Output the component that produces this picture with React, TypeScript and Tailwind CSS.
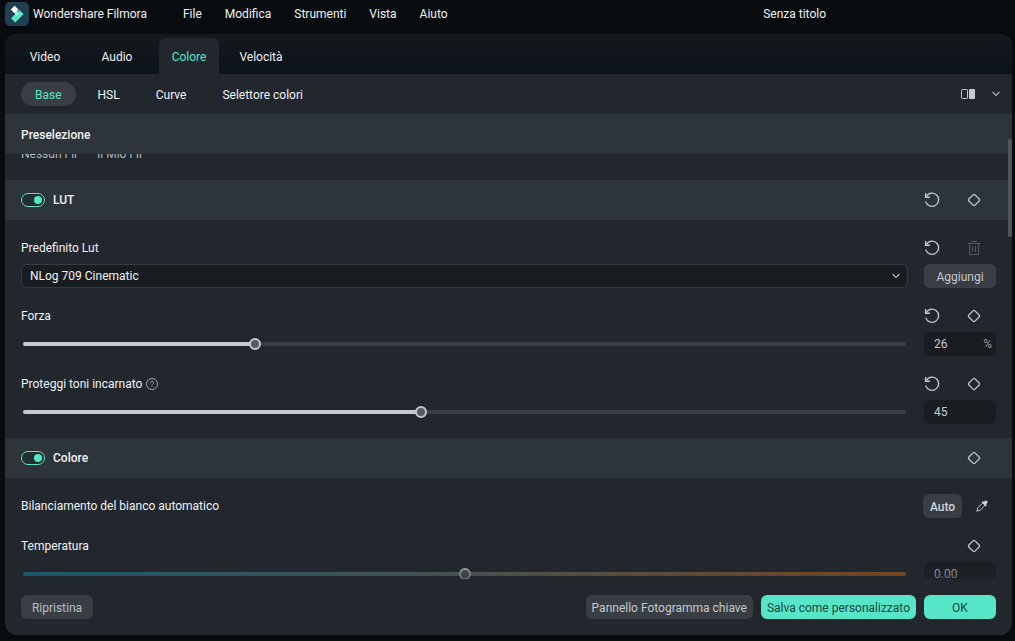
import { useState } from 'react';
import type { ReactNode } from 'react';
import { clsx } from 'clsx';

const menus = ['File', 'Modifica', 'Strumenti', 'Vista', 'Aiuto'];
const tabs = ['Video', 'Audio', 'Colore', 'Velocità'];
const subTabs = ['Base', 'HSL', 'Curve', 'Selettore colori'];

function Logo() {
  return (
    <svg width="24" height="24" viewBox="0 0 24 24" aria-hidden="true">
      <rect width="24" height="24" rx="5" fill="#223f52" />
      <path d="M9.6 3.8 L13.6 7.8 L9.8 11.6 L5.8 7.6 Z" fill="#ffffff" />
      <path d="M14.4 8 L18.6 12.2 L10.2 20.4 L6 16.2 Z" fill="#56e5c6" />
      <path d="M9.8 11.6 L12 9.4 L14 11.6 L11.4 14 Z" fill="#a4f3e1" />
    </svg>
  );
}

function ResetIcon() {
  return (
    <svg width="16" height="16" viewBox="0 0 16 16" fill="none" stroke="#c0c5ca" strokeWidth="1.4">
      <path d="M2 5 A6.6 6.6 0 1 1 1.7 9.6" />
      <path d="M1.6 1 V5.2 H6" />
    </svg>
  );
}

function DiamondIcon() {
  return (
    <svg width="16" height="16" viewBox="0 0 16 16" fill="none" stroke="#c0c5ca" strokeWidth="1.3">
      <rect x="3.7" y="3.7" width="8.6" height="8.6" rx="1.3" transform="rotate(45 8 8)" />
    </svg>
  );
}

function TrashIcon() {
  return (
    <svg width="16" height="16" viewBox="0 0 16 16" fill="none" stroke="#555a60" strokeWidth="1">
      <path d="M1.5 3.5 H14.5 M5 1.5 H11 M3.5 3.5 V14.5 H12.5 V3.5 M6.5 6 V12 M9.5 6 V12" />
    </svg>
  );
}

function DropperIcon() {
  return (
    <svg width="16" height="16" viewBox="0 0 16 16" fill="none">
      <path d="M9 4.6 L3.8 9.8 L2.8 13.2 L6.2 12.2 L11.4 7" stroke="#c0c5ca" strokeWidth="1" strokeLinejoin="round" />
      <path
        d="M7.6 4.2 L8.8 3.1 L9.8 4 L11 2.8 C12.4 1.7 14.3 3.6 13.2 5 L12 6.2 L12.9 7.2 L11.8 8.4 Z"
        fill="#d3d6d9"
      />
    </svg>
  );
}

function ChevronIcon() {
  return (
    <svg width="10" height="6" viewBox="0 0 10 6" fill="none" stroke="#b4b9be" strokeWidth="1.1">
      <path d="M1.6 1 L5 4.4 L8.4 1" />
    </svg>
  );
}

function CompareIcon() {
  return (
    <svg width="14" height="10" viewBox="0 0 14 10" className="shrink-0">
      <rect x="0.5" y="0.5" width="6" height="9" rx="0.8" fill="none" stroke="#c5c9ce" />
      <rect x="8" y="0" width="6" height="10" rx="0.8" fill="#c5c9ce" />
    </svg>
  );
}

function HelpIcon() {
  return (
    <svg width="12" height="12" viewBox="0 0 12 12" fill="none" stroke="#9da2a7" strokeWidth="1">
      <circle cx="6" cy="6" r="5.5" />
      <path d="M4.5 4.9 C4.5 2.7 7.6 2.8 7.5 4.7 C7.4 5.8 6 5.8 6 7.2 M6 8.1 V9.1" />
    </svg>
  );
}

function IconButton({ label, children }: { label: string; children: ReactNode }) {
  return (
    <button type="button" aria-label={label} className="flex h-4 w-4 items-center justify-center">
      {children}
    </button>
  );
}

function KeyframeActions({ reset = true }: { reset?: boolean }) {
  return (
    <div className="ml-auto flex items-center gap-[26px] pr-[14px]">
      {reset && (
        <IconButton label="Ripristina valore">
          <ResetIcon />
        </IconButton>
      )}
      <IconButton label="Fotogramma chiave">
        <DiamondIcon />
      </IconButton>
    </div>
  );
}

function SectionHeader({ title, reset }: { title: string; reset?: boolean }) {
  const [on, setOn] = useState(true);

  return (
    <div className="flex h-10 items-center bg-[#2d343a] px-4">
      <label className="flex items-center gap-2 font-medium">
        <input type="checkbox" className="peer sr-only" checked={on} onChange={() => setOn(!on)} />
        <span
          className={clsx(
            'flex h-[14px] w-6 items-center rounded-full border px-[2px]',
            on ? 'justify-end border-[#62dcc2] bg-[#20302f]' : 'justify-start border-[#7b8187]'
          )}
        >
          <span className={clsx('h-2 w-2 rounded-full', on ? 'bg-[#56e5c6]' : 'bg-[#7b8187]')} />
        </span>
        {title}
      </label>
      <KeyframeActions reset={reset} />
    </div>
  );
}

interface SliderRowProps {
  id: string;
  label: string;
  initial: number;
  min?: number;
  unit?: string;
  digits?: number;
  help?: boolean;
  reset?: boolean;
  track?: string;
}

function SliderRow({ id, label, initial, min = 0, unit, digits = 0, help, reset, track }: SliderRowProps) {
  const [value, setValue] = useState(initial);
  const pct = ((value - min) / (100 - min)) * 100;
  const fill = `linear-gradient(to right, #c5c9d0 ${pct}%, #383f45 ${pct}%)`;

  return (
    <div className="flex flex-col gap-1">
      <div className="flex h-6 items-center gap-1">
        <label htmlFor={id}>{label}</label>
        {help && <HelpIcon />}
        <KeyframeActions reset={reset} />
      </div>
      <div className="flex items-center gap-4">
        <div className="flex h-6 flex-1 items-center px-[2px]">
          <input
            id={id}
            type="range"
            min={min}
            max={100}
            value={value}
            onChange={(e) => setValue(Number(e.target.value))}
            className="h-1 w-full appearance-none rounded-full [&::-webkit-slider-thumb]:h-3 [&::-webkit-slider-thumb]:w-3 [&::-webkit-slider-thumb]:appearance-none [&::-webkit-slider-thumb]:rounded-full [&::-webkit-slider-thumb]:border-2 [&::-webkit-slider-thumb]:border-[#c5c9d0] [&::-webkit-slider-thumb]:bg-[#555b62]"
            style={{ background: track ?? fill }}
          />
        </div>
        <div className="flex h-6 w-[72px] items-center rounded-md bg-[#191d21] pr-1 pl-[10px] text-[#c5c9cd]">
          <input
            aria-label={label}
            className="w-full min-w-0 bg-transparent outline-none"
            value={value.toFixed(digits)}
            onChange={(e) => setValue(Number(e.target.value) || 0)}
          />
          {unit && <span className="text-[#92979c]">{unit}</span>}
        </div>
      </div>
    </div>
  );
}

export default function App() {
  const [tab, setTab] = useState('Colore');
  const [subTab, setSubTab] = useState('Base');

  return (
    <div className="flex h-screen flex-col bg-[#090c0e] pr-[3px] pb-[6px] pl-[5px] font-['Roboto','Noto_Sans',sans-serif] text-xs text-[#f0f2f3]">
      <header className="flex h-[34px] shrink-0 items-start pt-[2px]">
        <div className="flex items-center gap-1">
          <Logo />
          <span>Wondershare Filmora</span>
        </div>
        <nav className="ml-9 flex h-6 items-center gap-[23px]">
          {menus.map((m) => (
            <button key={m} type="button">
              {m}
            </button>
          ))}
        </nav>
        <span className="mr-[186px] ml-auto flex h-6 items-center">Senza titolo</span>
      </header>

      <main className="flex min-h-0 flex-1 flex-col overflow-hidden rounded-xl bg-[#21272d]">
        <div
          role="tablist"
          className="flex h-10 shrink-0 items-end gap-3 bg-linear-to-b from-[#14191d] to-[#0b1219] pl-[10px]"
        >
          {tabs.map((t) => (
            <button
              key={t}
              type="button"
              role="tab"
              aria-selected={tab === t}
              onClick={() => setTab(t)}
              className={clsx(
                'h-9 min-w-[60px] rounded-t-md pt-0.5',
                tab === t && 'bg-[#21272d] text-[#56e5c6]'
              )}
            >
              {t}
            </button>
          ))}
        </div>

        <div className="flex h-10 shrink-0 items-center pr-2 pl-4">
          <div className="flex gap-2">
            {subTabs.map((t) => (
              <button
                key={t}
                type="button"
                onClick={() => setSubTab(t)}
                className={clsx(
                  'h-6 rounded-full px-[14px] pt-0.5',
                  subTab === t && 'bg-[#383e44] text-[#56e5c6]'
                )}
              >
                {t}
              </button>
            ))}
          </div>
          <div className="ml-auto flex items-center gap-3">
            <IconButton label="Confronta">
              <CompareIcon />
            </IconButton>
            <IconButton label="Altre opzioni">
              <ChevronIcon />
            </IconButton>
          </div>
        </div>

        <div className="relative min-h-0 flex-1 overflow-hidden">
          <h2 className="relative z-10 flex h-10 items-center bg-[#2d343a] px-4 pt-0.5 font-medium">Preselezione</h2>

          {/* preset names, scrolled up under the heading */}
          <div className="-mt-2 flex h-[34px] items-start gap-5 px-4 leading-4 text-[#b4b9bd]">
            <span>Nessun Fil</span>
            <span>Il Mio Fil</span>
          </div>

          <SectionHeader title="LUT" reset />
          <div className="flex flex-col gap-4 px-4 pt-4 pb-[14px]">
            <div className="flex flex-col gap-1">
              <div className="flex h-6 items-center">
                <label htmlFor="lut">Predefinito Lut</label>
                <div className="ml-auto flex items-center gap-[26px] pr-[14px]">
                  <IconButton label="Ripristina LUT">
                    <ResetIcon />
                  </IconButton>
                  <IconButton label="Elimina LUT">
                    <TrashIcon />
                  </IconButton>
                </div>
              </div>
              <div className="flex items-center gap-4">
                <div className="relative flex-1">
                  <select
                    id="lut"
                    className="h-6 w-full appearance-none rounded-md border border-[#373d42] bg-[#191d21] px-2 outline-none"
                  >
                    <option>NLog 709 Cinematic</option>
                  </select>
                  <span className="pointer-events-none absolute inset-y-0 right-[7px] flex items-center">
                    <ChevronIcon />
                  </span>
                </div>
                <button type="button" className="h-6 w-[72px] rounded-md bg-[#383e44] pt-0.5 text-[#c5c9cd]">
                  Aggiungi
                </button>
              </div>
            </div>
            <SliderRow id="forza" label="Forza" initial={26} unit="%" />
            <SliderRow id="toni" label="Proteggi toni incarnato" initial={45} help />
          </div>

          <SectionHeader title="Colore" reset={false} />
          <div className="flex flex-col gap-4 px-4 pt-4">
            <div className="flex h-6 items-center">
              <span>Bilanciamento del bianco automatico</span>
              <div className="ml-auto flex items-center gap-3 pr-[6px]">
                <button type="button" className="h-6 w-[39px] rounded-md bg-[#383e44] pt-0.5 font-medium text-[#d3d6d9]">
                  Auto
                </button>
                <IconButton label="Contagocce">
                  <DropperIcon />
                </IconButton>
              </div>
            </div>
            <SliderRow
              id="temperatura"
              label="Temperatura"
              initial={0}
              min={-100}
              digits={2}
              reset={false}
              track="linear-gradient(to right, #17809e, #66736a 50%, #b55c18)"
            />
          </div>

          <div className="pointer-events-none absolute inset-x-0 bottom-0 h-5 bg-linear-to-b from-transparent to-[#21272d]/60" />
          <div className="absolute top-[25px] right-0 z-20 h-[98px] w-1 rounded-sm bg-[#50565c]" />
        </div>

        <footer className="flex h-14 shrink-0 items-center gap-2 px-4">
          <button type="button" className="mr-auto h-6 w-[72px] rounded-md bg-[#383e44] pt-0.5 text-[#b9bdc1]">
            Ripristina
          </button>
          <button type="button" className="h-6 rounded-md bg-[#383e44] px-[6px] pt-0.5 text-[#c5c9cd]">
            Pannello Fotogramma chiave
          </button>
          <button type="button" className="h-6 rounded-md bg-[#56e5c6] px-[6px] pt-0.5 text-[#1b4740]">
            Salva come personalizzato
          </button>
          <button type="button" className="h-6 w-[72px] rounded-md bg-[#56e5c6] pt-0.5 text-[#1b4740]">
            OK
          </button>
        </footer>
      </main>
    </div>
  );
}
